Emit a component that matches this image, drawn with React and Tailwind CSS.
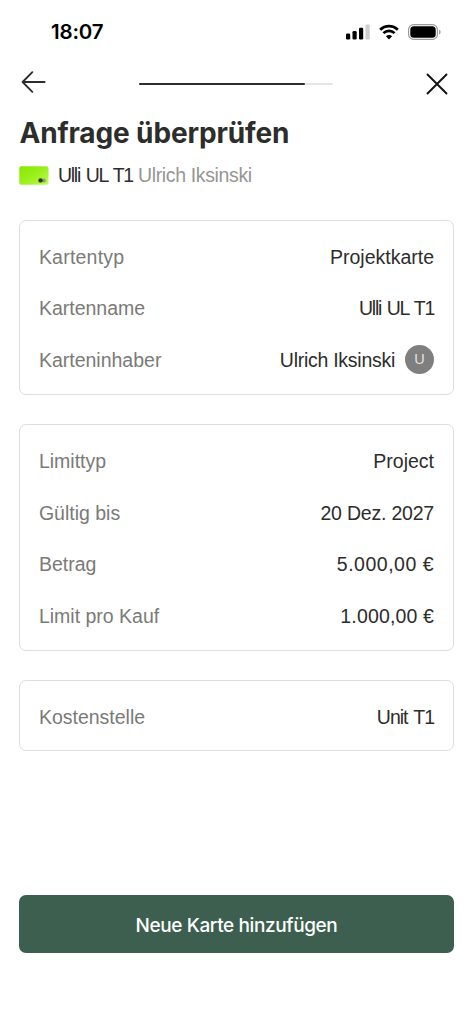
import React from "react";
import clsx from "clsx";

const sections = [
  [
    { label: "Kartentyp", value: "Projektkarte", labelClass: "tracking-[0.22px]" },
    {
      label: "Kartenname",
      value: "Ulli UL T1",
      valueClass: "tracking-[-1.25px] [word-spacing:1.5px]",
    },
    {
      label: "Karteninhaber",
      value: "Ulrich Iksinski",
      valueClass: "tracking-[-0.27px]",
      avatar: "U",
    },
  ],
  [
    { label: "Limittyp", value: "Project" },
    { label: "Gültig bis", value: "20 Dez. 2027", valueClass: "tracking-[-0.2px]" },
    { label: "Betrag", value: "5.000,00 €", valueClass: "tracking-[0.5px]" },
    { label: "Limit pro Kauf", value: "1.000,00 €", valueClass: "tracking-[0.15px]" },
  ],
  [
    {
      label: "Kostenstelle",
      value: "Unit T1",
      valueClass: "tracking-[-1.05px] [word-spacing:2px]",
    },
  ],
];

function StatusBar() {
  return (
    <div className="flex h-[64px] items-center justify-between pr-[32px] pl-[51px] text-black">
      <span className="font-['Inter',sans-serif] text-[20.5px] leading-none font-semibold tracking-[-0.2px]">
        18:07
      </span>
      <div className="flex items-center gap-[9px]">
        <svg width="24" height="16" viewBox="0 0 24 16" fill="currentColor">
          <rect x="0" y="9.5" width="4.2" height="6" rx="1.3" />
          <rect x="6.5" y="7" width="4.2" height="8.5" rx="1.3" />
          <rect x="13" y="3.7" width="4.2" height="11.8" rx="1.3" />
          <rect x="19.5" y="0.5" width="4.2" height="15" rx="1.3" fill="#cfcfcf" />
        </svg>
        <svg width="20" height="16" viewBox="0 0 20 16" fill="none" stroke="currentColor">
          <path d="M1.2 5.8C6 0.8 14 0.8 18.8 5.8" strokeWidth="2.7" />
          <path d="M4.4 9.2C7.5 6.1 12.5 6.1 15.6 9.2" strokeWidth="2.6" />
          <path d="M10 15.4L6.9 12.3C8.6 10.6 11.4 10.6 13.1 12.3Z" fill="currentColor" stroke="none" />
        </svg>
        <svg width="33" height="16" viewBox="0 0 33 16">
          <rect x="0.6" y="0.6" width="28.8" height="14.8" rx="5" fill="none" stroke="#9b9b9b" strokeWidth="1.2" />
          <rect x="2.3" y="2.3" width="25.4" height="11.4" rx="3.5" fill="#000" />
          <path d="M31 5.6C33.2 6.4 33.2 9.6 31 10.4Z" fill="#a3a3a3" />
        </svg>
      </div>
    </div>
  );
}

function NavBar() {
  return (
    <div className="flex h-[40px] items-center justify-between pr-[25px] pl-[21px]">
      <button type="button" aria-label="Zurück">
        <svg
          width="25"
          height="22"
          viewBox="0 0 25 22"
          fill="none"
          stroke="#2d2d2b"
          strokeWidth="1.9"
          strokeLinecap="round"
          strokeLinejoin="round"
          className="mb-[4px]"
        >
          <path d="M23.6 11H1.6M11.3 1.2L1.6 11L11.3 20.8" />
        </svg>
      </button>
      <div className="h-[2.5px] w-[194px] rounded-full bg-[#e5e5e3]">
        <div className="h-full w-[166px] rounded-full bg-[#2d2d2b]" />
      </div>
      <button type="button" aria-label="Schließen">
        <svg
          width="22"
          height="22"
          viewBox="0 0 22 22"
          fill="none"
          stroke="#111"
          strokeWidth="1.9"
          strokeLinecap="round"
        >
          <path d="M1.5 1.5L20.5 20.5M20.5 1.5L1.5 20.5" />
        </svg>
      </button>
    </div>
  );
}

function CardThumb() {
  return (
    <svg width="30" height="19" viewBox="0 0 30 19">
      <defs>
        <linearGradient id="lime" x1="0" y1="0" x2="1" y2="1">
          <stop offset="0" stopColor="#85e800" />
          <stop offset="0.5" stopColor="#9cf01c" />
          <stop offset="1" stopColor="#baff50" />
        </linearGradient>
      </defs>
      <rect x="0.3" y="0.3" width="29.2" height="18.4" rx="2" fill="url(#lime)" />
      <circle cx="24.8" cy="14.4" r="2" fill="#8f9a80" />
      <circle cx="21.5" cy="14.4" r="2.2" fill="#2b3a14" />
    </svg>
  );
}

function Row({ label, value, labelClass, valueClass, avatar }) {
  return (
    <div className="flex h-[51.8px] items-center justify-between">
      <span className={clsx("pt-[3px] text-[#7a7a77]", labelClass)}>{label}</span>
      <span className="flex items-center gap-[10px] text-[#2d2d2b]">
        <span className={clsx("pt-[3px]", valueClass)}>{value}</span>
        {avatar && (
          <span className="flex size-[29px] items-center justify-center rounded-full bg-[#7f7f7f] text-[14.5px] text-[#e2e2e2]">
            {avatar}
          </span>
        )}
      </span>
    </div>
  );
}

function App() {
  return (
    <div className="flex h-[1024px] w-[473px] flex-col bg-white font-['Liberation_Sans',sans-serif] text-[19.5px] leading-none">
      <StatusBar />
      <NavBar />

      <main className="flex grow flex-col pr-[19.5px] pl-[19.4px]">
        <h1 className="mt-[13px] font-['Inter',sans-serif] text-[28px] leading-[32px] font-bold tracking-[-0.13px] text-[#2d2d2b]">
          Anfrage überprüfen
        </h1>
        <div className="mt-[16px] flex h-[20px] items-center">
          <CardThumb />
          <span className="ml-[8.5px] pt-[2px] tracking-[-1.25px] text-[#2d2d2b] [word-spacing:1.5px]">
            Ulli UL T1
          </span>
          <span className="ml-[5px] pt-[2px] tracking-[-0.35px] text-[#969693]">Ulrich Iksinski</span>
        </div>

        <div className="mt-[35.4px] flex flex-col gap-[29.5px]">
          {sections.map((rows, index) => (
            <section
              key={index}
              className="rounded-[7px] border border-[#dededd] px-[18.5px] py-[8.6px]"
            >
              {rows.map((row) => (
                <Row key={row.label} {...row} />
              ))}
            </section>
          ))}
        </div>

        <button
          type="button"
          className="mt-auto mb-[71px] h-[58px] shrink-0 rounded-[7px] bg-[#3c5f50] pt-[2px] font-['Inter',sans-serif] text-[19px] font-medium tracking-[-0.38px] text-white"
        >
          Neue Karte hinzufügen
        </button>
      </main>
    </div>
  );
}

export default App;
